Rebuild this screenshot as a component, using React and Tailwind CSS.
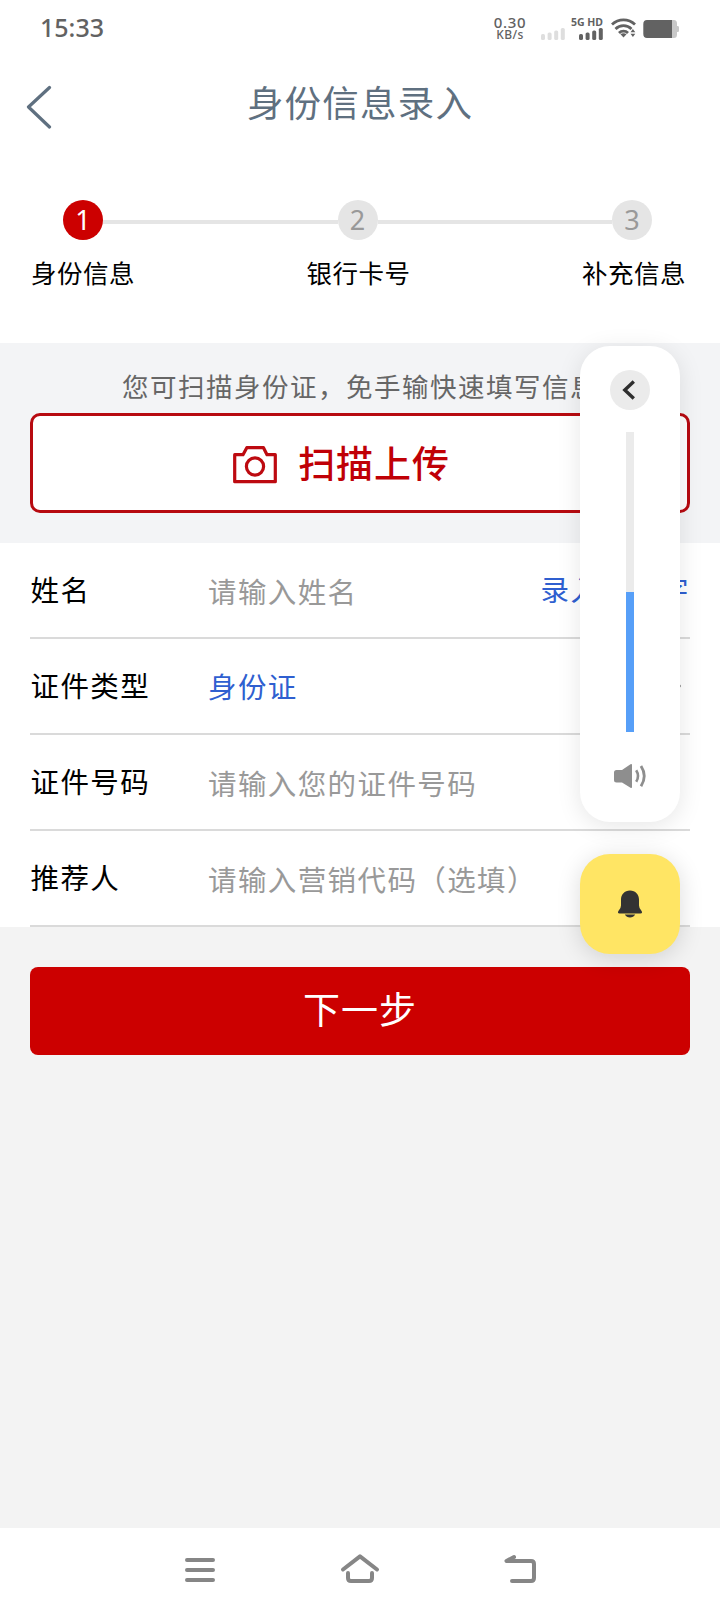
import { useState } from 'react';

const steps = ['身份信息', '银行卡号', '补充信息'];

function SignalBars({ className }) {
  return (
    <svg width="24" height="12" viewBox="0 0 24 12" fill="currentColor" className={className}>
      <rect x="0" y="6" width="4" height="6" rx="1.6" />
      <rect x="6.6" y="4.5" width="4" height="7.5" rx="1.6" />
      <rect x="13.2" y="2.5" width="4" height="9.5" rx="1.6" />
      <rect x="19.8" y="0" width="4" height="12" rx="1.6" />
    </svg>
  );
}

function StatusBar() {
  return (
    <div className="h-14 flex items-center justify-between pl-10 pr-10 text-[#626262] font-medium font-['Noto_Sans',sans-serif]">
      <span className="pb-[2px] text-[25px] leading-none">15:33</span>
      <div className="flex items-center">
        <div className="flex flex-col items-center w-[34px] mr-[14px]">
          <span className="text-[15px] leading-[14px] tracking-[0.7px]">0.30</span>
          <span className="text-[12px] leading-[12px] tracking-[0.4px]">KB/s</span>
        </div>
        <SignalBars className="text-[#dedede] mt-[11px] mr-[4px]" />
        <div className="flex flex-col items-end w-[34px] mr-[8px]">
          <span className="text-[10.5px] leading-[12px] font-bold whitespace-nowrap">5G HD</span>
          <SignalBars />
        </div>
        <svg width="26" height="20" viewBox="0 0 26 20" fill="none" stroke="currentColor" strokeWidth="2.8">
          <path d="M1 6.500C7.500 .3 17.500 .3 24 6.500" />
          <path d="M4.500 11C9 6.600 16 6.600 20.500 11" />
          <path d="M8 15C10.500 12.500 14.500 12.500 17 15" />
          <path d="M9.500 16.300L12.500 19.500L15.500 16.300C14 14.900 11 14.900 9.500 16.300Z" fill="currentColor" stroke="none" />
          <path d="M19.500 14.200L21.900 11L24.300 14.200ZM19.500 15.800H24.300L21.900 19Z" fill="currentColor" stroke="none" />
        </svg>
        <svg width="37" height="18" viewBox="0 0 37 18" className="ml-[6px] mt-px">
          <path d="M5 0H31Q34 0 34 3.500V6H35Q36 6 36 7.500V10.500Q36 12 35 12H34V14.500Q34 18 31 18H5Z" fill="#c8c8c8" />
          <path d="M4 0H29V18H4Q.3 18 .3 14V4Q.3 0 4 0Z" fill="#626262" />
        </svg>
      </div>
    </div>
  );
}

function Stepper({ current }) {
  return (
    <div className="h-[193px] pt-[50px]">
      <div className="flex items-center pl-[63px] pr-[68px] font-['Noto_Sans',sans-serif]">
        {steps.map((label, i) => (
          <div key={label} className={i === 0 ? 'flex items-center' : 'flex items-center flex-1'}>
            {i > 0 && <div className="flex-1 h-1 mt-1 bg-[#e5e5e5]"></div>}
            <div
              className={
                i === current
                  ? 'w-10 h-10 pb-[2px] rounded-full flex items-center justify-center text-[27px] leading-none bg-[#cc0000] text-white'
                  : 'w-10 h-10 pb-[2px] rounded-full flex items-center justify-center text-[27px] leading-none bg-[#e5e5e5] text-[#999999]'
              }
            >
              {i + 1}
            </div>
          </div>
        ))}
      </div>
      <div className="flex justify-between pl-[31px] pr-[34px] mt-[14px] text-black text-[25.5px] leading-[36px] tracking-[0.5px]">
        {steps.map((label) => (
          <span key={label}>{label}</span>
        ))}
      </div>
    </div>
  );
}

function FormRow({ label, children }) {
  return (
    <div className="h-24 flex items-center border-b-2 border-[#dadada] text-[28.5px] tracking-[1.4px]">
      <label className="w-[178px] shrink-0 pl-[0.5px] pb-px text-black">{label}</label>
      {children}
    </div>
  );
}

function TextField({ placeholder, value, onChange }) {
  return (
    <input
      type="text"
      value={value}
      placeholder={placeholder}
      onChange={(e) => onChange(e.target.value)}
      className="flex-1 min-w-0 h-[60px] text-black placeholder:text-[#999999] focus:outline-none"
    />
  );
}

function VolumePanel({ level }) {
  return (
    <div className="w-[100px] h-[476px] rounded-[30px] bg-white shadow-[0_4px_24px_rgba(0,0,0,0.10)] flex flex-col items-center pt-6">
      <button className="w-10 h-10 rounded-full bg-[#ebebeb] flex items-center justify-center">
        <svg width="14" height="20" viewBox="0 0 14 20" fill="none" stroke="#2e2e2e" strokeWidth="3.4" className="mr-[2px]">
          <path d="M11.800 1.500L2.800 10L11.800 18.500" />
        </svg>
      </button>
      <div className="w-2 h-[300px] mt-[22px] bg-[#ebebeb] flex flex-col justify-end">
        <div className="bg-[#579ff8]" style={{ height: `${level}px` }}></div>
      </div>
      <svg width="34" height="26" viewBox="0 0 34 26" fill="none" stroke="#8e8e8e" className="mt-[31px]">
        <path d="M3.500 7H9L17.500 1.300Q19 .5 19 2V24Q19 25.500 17.500 24.700L9 19.500H3.500Q1 19.500 1 17V9.500Q1 7 3.500 7Z" fill="#8e8e8e" stroke="none" />
        <path d="M23.200 7.200Q26.800 13 23.200 18.800" strokeWidth="2.600" />
        <path d="M28 3Q34.500 13 28 23.300" strokeWidth="2.800" />
      </svg>
    </div>
  );
}

export default function App() {
  const [name, setName] = useState('');
  const [idNumber, setIdNumber] = useState('');
  const [referrer, setReferrer] = useState('');

  return (
    <div className="relative w-[720px] h-[1612px] overflow-hidden flex flex-col bg-[#f3f3f3] font-['Noto_Sans_CJK_SC',sans-serif]">
      <div className="bg-white">
        <StatusBar />

        {/* Title bar */}
        <div className="h-[94px] grid grid-cols-[100px_1fr_100px] items-center">
          <button className="pl-[26px] pt-[8px]">
            <svg width="26" height="44" viewBox="0 0 26 44" fill="none" stroke="#5f7080" strokeWidth="3.2" strokeLinecap="round" strokeLinejoin="round">
              <path d="M23.500 2.500L2.500 22L23.500 42" />
            </svg>
          </button>
          <h1 className="pb-[2px] text-center text-[36.5px] leading-none tracking-[1.2px] text-[#5f7080]">身份信息录入</h1>
        </div>

        <Stepper current={0} />
      </div>

      {/* Scan card */}
      <div className="h-[200px] bg-[#f3f4f6] px-[30px] pt-[23px]">
        <p className="text-center text-[26.5px] leading-[40px] tracking-[1.5px] text-[#666666]">您可扫描身份证，免手输快速填写信息</p>
        <button className="w-full h-[100px] mt-[7px] pr-[37px] rounded-[10px] border-3 border-[#b70a10] bg-white flex items-center justify-center">
          <svg width="44" height="38" viewBox="0 0 44 38" fill="none" stroke="#bd0a10" strokeWidth="3.200" strokeLinejoin="round" className="mr-[21px] mt-[3px]">
            <path d="M1.700 8.700H10L13.800 1.700H30.500L34 8.700H42.300V35.700H1.700Z" />
            <circle cx="22" cy="20.500" r="8.600" />
          </svg>
          <span className="pb-px text-[37px] leading-none tracking-[0.9px] font-medium text-[#c00006]">扫描上传</span>
        </button>
      </div>

      {/* Form */}
      <div className="bg-white px-[30px]">
        <FormRow label="姓名">
          <TextField placeholder="请输入姓名" value={name} onChange={setName} />
          <a className="shrink-0 pb-px text-[#2f5fd0]">录入生僻字</a>
        </FormRow>
        <FormRow label="证件类型">
          <span className="flex-1 text-[#2f5fd0]">身份证</span>
          <svg width="12" height="22" viewBox="0 0 12 22" fill="none" stroke="#999999" strokeWidth="2" className="mr-[9px]">
            <path d="M1 1L11 11L1 21" />
          </svg>
        </FormRow>
        <FormRow label="证件号码">
          <TextField placeholder="请输入您的证件号码" value={idNumber} onChange={setIdNumber} />
        </FormRow>
        <FormRow label="推荐人">
          <TextField placeholder="请输入营销代码（选填）" value={referrer} onChange={setReferrer} />
        </FormRow>
      </div>

      <div className="flex-1 px-[30px] pt-10">
        <button className="w-full h-[88px] pb-[5px] rounded-lg bg-[#cc0000] text-white text-[37px] leading-none tracking-[1px]">下一步</button>
      </div>

      {/* System navigation */}
      <div className="h-[84px] bg-white flex items-center justify-between px-[184px] text-[#868686]">
        <svg width="32" height="26" viewBox="0 0 32 26" fill="none" stroke="currentColor" strokeWidth="4" strokeLinecap="round">
          <path d="M3 3H29M3 13H29M3 23H29" />
        </svg>
        <svg width="40" height="32" viewBox="0 0 40 32" fill="none" stroke="currentColor" strokeWidth="4" strokeLinecap="round" strokeLinejoin="round" className="-mt-1 ml-[2px]">
          <path d="M3 17.500L20 4.300L37 17.500" />
          <path d="M8 21V26Q8 29 11 29H29Q32 29 32 26V21" />
        </svg>
        <svg width="34" height="30" viewBox="0 0 34 30" fill="none" stroke="currentColor" strokeWidth="4" strokeLinecap="round" strokeLinejoin="round" className="-mt-1">
          <path d="M12 4L4.500 8H29Q32 8 32 11V25Q32 28 29 28H10" />
        </svg>
      </div>

      {/* Floating volume controls */}
      <div className="absolute left-[580px] top-[346px] flex flex-col gap-8">
        <VolumePanel level={140} />
        <button className="w-[100px] h-[100px] rounded-[30px] bg-[#ffe564] shadow-[0_4px_24px_rgba(0,0,0,0.14)] flex items-center justify-center">
          <svg width="26" height="28" viewBox="0 0 26 28" fill="#333333">
            <path d="M13 .5C18.500 .5 22 4.500 22 9.500V15.500Q22 18.500 24.600 21Q25.800 23.500 23.500 23.500H2.500Q.2 23.500 1.400 21Q4 18.500 4 15.500V9.500C4 4.500 7.500 .5 13 .5Z" />
            <path d="M7.800 24.600H18.200Q16.500 27.500 13 27.500Q9.500 27.500 7.800 24.600Z" />
          </svg>
        </button>
      </div>
    </div>
  );
}
